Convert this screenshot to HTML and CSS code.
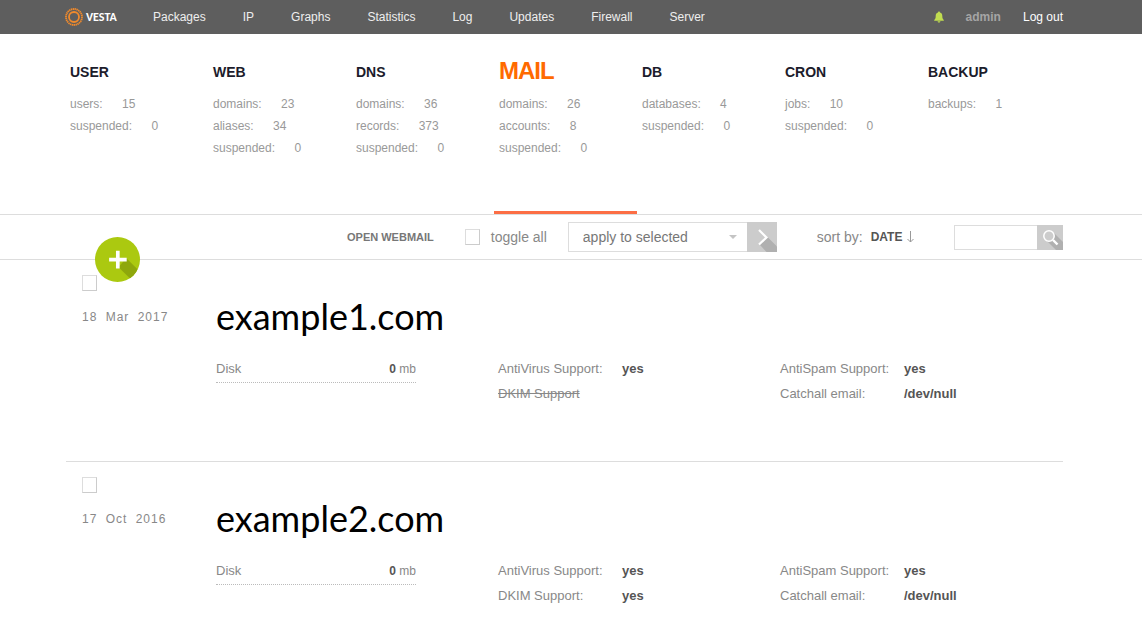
FILE: index.html
```html
<!DOCTYPE html>
<html lang="en">
<head>
<meta charset="utf-8">
<title>Vesta - MAIL</title>
<link rel="stylesheet" href="styles.css">
</head>
<body>
<header class="topbar">
  <a class="logo" href="#">
    <svg class="logo-mark" viewBox="0 0 18 18" aria-hidden="true"><circle cx="9" cy="9" r="8" fill="none" stroke="#f08a2c" stroke-width="1.8" stroke-dasharray="1.4 .5"/><circle cx="9" cy="9" r="5" fill="none" stroke="#f08a2c" stroke-width="1.8"/></svg>
    <span class="logo-text">VESTA</span>
  </a>
  <nav class="menu">
    <a href="#">Packages</a><a href="#">IP</a><a href="#">Graphs</a><a href="#">Statistics</a><a href="#">Log</a><a href="#">Updates</a><a href="#">Firewall</a><a href="#">Server</a>
  </nav>
  <div class="account">
    <button class="bell" aria-label="Notifications"><svg viewBox="0 0 10 12"><path d="M5 0.4c.7 0 1 .5 1 1C7.700 1.900 8.300 3.200 8.300 5c0 2.200.5 3 1.500 4v.8H.2V9c1-1 1.500-1.800 1.500-4C1.700 3.200 2.300 1.900 4 1.400c0-.5.3-1 1-1zM3.600 10.200h2.800c0 .8-.6 1.400-1.400 1.400s-1.400-.6-1.400-1.400z" fill="#c0dc50"/></svg></button>
    <a class="user" href="#">admin</a>
    <a class="logout" href="#">Log out</a>
  </div>
</header>

<section class="stats">
  <a class="stat" href="#"><h2>USER</h2><p>users: <span>15</span></p><p>suspended: <span>0</span></p></a>
  <a class="stat" href="#"><h2>WEB</h2><p>domains: <span>23</span></p><p>aliases: <span>34</span></p><p>suspended: <span>0</span></p></a>
  <a class="stat" href="#"><h2>DNS</h2><p>domains: <span>36</span></p><p>records: <span>373</span></p><p>suspended: <span>0</span></p></a>
  <a class="stat active" href="#"><h2>MAIL</h2><p>domains: <span>26</span></p><p>accounts: <span>8</span></p><p>suspended: <span>0</span></p></a>
  <a class="stat" href="#"><h2>DB</h2><p>databases: <span>4</span></p><p>suspended: <span>0</span></p></a>
  <a class="stat" href="#"><h2>CRON</h2><p>jobs: <span>10</span></p><p>suspended: <span>0</span></p></a>
  <a class="stat" href="#"><h2>BACKUP</h2><p>backups: <span>1</span></p></a>
</section>

<section class="toolbar">
  <button class="add" aria-label="Add mail domain"><svg viewBox="0 0 44 44"><defs><clipPath id="disc"><circle cx="22" cy="22" r="22"/></clipPath></defs><circle cx="22" cy="22" r="22" fill="#abc910"/><path clip-path="url(#disc)" d="M23 29.500 30.500 20.500 50 40 42 48z" fill="#8ea70c"/><path d="M20.500 13.500h3.600v6.700h6.900v3.800h-6.900v6.700h-3.600V24h-6.700v-3.800h6.700z" fill="#fff"/></svg></button>
  <a class="webmail" href="#">OPEN WEBMAIL</a>
  <label class="toggle"><input class="check" type="checkbox">toggle all</label>
  <form class="bulk">
    <div class="pick">
      <select aria-label="Bulk action"><option>apply to selected</option></select>
      <svg class="caret" viewBox="0 0 8 4"><path d="M0 0h8L4 4z" fill="#c4c4c4"/></svg>
    </div>
    <button class="go" type="button" aria-label="Apply"><svg viewBox="0 0 30 30"><path d="M20.500 15 30 24.500V30H19.500L13 23z" fill="#b0b0b0"/><path d="m12 8 7.500 7.500-7.500 7" fill="none" stroke="#fff" stroke-width="2.200"/></svg></button>
  </form>
  <div class="sort">sort by: <a href="#">DATE</a><svg viewBox="0 0 7 12"><path d="M3.500 0v11M.5 8l3 3 3-3" fill="none" stroke="#999"/></svg></div>
  <form class="search">
    <input type="text" aria-label="Search">
    <button type="button" aria-label="Search"><svg viewBox="0 0 26 25"><path d="M17 8 26 17v8h-7l-9-9z" fill="#b0b0b0"/><circle cx="12" cy="11" r="5.200" fill="#ccc" stroke="#fff" stroke-width="1.500"/><path d="m16 15 4.500 4.500" stroke="#fff" stroke-width="2.400"/></svg></button>
  </form>
</section>

<main class="list">
  <article class="unit">
    <div class="side"><input class="check" type="checkbox" aria-label="Select example1.com"><time datetime="2017-03-18">18 Mar 2017</time></div>
    <div class="body">
      <h1>example1.com</h1>
      <div class="facts">
        <div class="disk"><span>Disk</span><span class="amount"><b>0</b> mb</span></div>
        <dl><dt>AntiVirus Support:</dt><dd>yes</dd><dt class="off">DKIM Support</dt><dd></dd></dl>
        <dl><dt>AntiSpam Support:</dt><dd>yes</dd><dt>Catchall email:</dt><dd>/dev/null</dd></dl>
      </div>
    </div>
  </article>
  <article class="unit">
    <div class="side"><input class="check" type="checkbox" aria-label="Select example2.com"><time datetime="2016-10-17">17 Oct 2016</time></div>
    <div class="body">
      <h1>example2.com</h1>
      <div class="facts">
        <div class="disk"><span>Disk</span><span class="amount"><b>0</b> mb</span></div>
        <dl><dt>AntiVirus Support:</dt><dd>yes</dd><dt>DKIM Support:</dt><dd>yes</dd></dl>
        <dl><dt>AntiSpam Support:</dt><dd>yes</dd><dt>Catchall email:</dt><dd>/dev/null</dd></dl>
      </div>
    </div>
  </article>
</main>
</body>
</html>
```
FILE: styles.css
```css
* { box-sizing: border-box; }
body { margin: 0; background: #fff; color: #888; font: 13px/25px "Liberation Sans", Arial, sans-serif; }
a { color: inherit; text-decoration: none; }
h1, h2, p, dl, dd { margin: 0; }
button { border: 0; padding: 0; background: none; cursor: pointer; }
svg { display: block; }
input, select { font: inherit; color: inherit; }

.topbar, .toolbar { padding: 0 79px 0 65px; }
.topbar { display: flex; align-items: center; height: 34px; background: #5e5e5e; color: #eee; font-size: 12px; }
.logo { display: flex; align-items: center; gap: 3px; width: 88px; color: #fff; }
.logo-mark { width: 18px; height: 18px; }
.logo-text { font: bold 12px/18px Carlito, Lato, sans-serif; }
.menu { display: flex; gap: 37px; }
.account { display: flex; align-items: center; margin-left: auto; }
.bell { margin-right: 22px; }
.bell svg { width: 10px; height: 12px; }
.user { margin-right: 22px; color: #a5a5a5; font-weight: bold; }
.logout { color: #fff; }

.stats { display: flex; height: 181px; padding-left: 65px; border-bottom: 1px solid #ddd; font-size: 12px; color: #999; }
.stat { flex: 0 1 143px; padding: 24px 0 0 5px; border-bottom: 3px solid transparent; line-height: 22px; }
.stat h2 { height: 28px; margin-bottom: 7px; font-size: 14px; line-height: 28px; color: #1c1c2b; }
.stat span { margin-left: 16px; }
.active { border-color: #fc6e45; }
.stat.active h2 { color: #ff6a00; font-size: 24px; line-height: 26px; letter-spacing: -1px; }

.toolbar { position: relative; display: flex; align-items: center; height: 45px; border-bottom: 1px solid #ddd; font-size: 14px; }
.add { position: absolute; left: 95px; top: 22px; width: 45px; height: 45px; }
.webmail { margin: 0 31px 0 282px; font-size: 11px; font-weight: bold; color: #777; }
.check { appearance: none; flex: none; width: 15px; height: 16px; margin: 0; border: 1px solid #ccc; border-top-color: #ddd; border-left-color: #ddd; background: #fff; }
.toggle { display: flex; align-items: center; gap: 11px; margin-right: 21px; }
.bulk { display: flex; }
.pick { position: relative; width: 179px; }
.pick select { appearance: none; display: block; width: 100%; height: 30px; padding: 0 14px; border: 1px solid #ddd; border-right: 0; border-radius: 0; background: #fff; color: #777; }
.caret { position: absolute; right: 10px; top: 13px; width: 8px; height: 4px; pointer-events: none; }
.go { width: 30px; height: 30px; background: #ccc; }
.sort { display: flex; align-items: center; margin-left: 40px; white-space: pre; }
.sort a { margin: 0 5px 0 4px; font-size: 12px; font-weight: bold; color: #555; }
.sort svg { width: 7px; height: 12px; }
.search { display: flex; margin-left: auto; }
.search input { width: 83px; height: 25px; padding: 0 8px; border: 1px solid #ddd; border-right: 0; border-radius: 0; }
.search button { width: 26px; height: 25px; background: #ccc; }

.list { padding: 0 79px 0 66px; }
.unit { display: flex; min-height: 202px; padding: 15px 0 0 16px; border-bottom: 1px solid #ddd; }
.side { width: 134px; flex: none; }
.side .check { display: block; margin-bottom: 13px; }
.side time { font-size: 12px; letter-spacing: 1px; word-spacing: 4px; }
.body { flex: 1; }
.body h1 { margin: 16px 0 15px; color: #000; font: 36px/50px Lato, Carlito, sans-serif; }
.facts { display: grid; grid-template-columns: 200px 200px 1fr; column-gap: 82px; }
.disk { display: flex; justify-content: space-between; height: 27px; border-bottom: 1px dotted #bbb; }
.disk .amount { font-size: 12px; line-height: 27px; }
.disk b { color: #555; }
.facts dl { display: grid; grid-template-columns: 124px 1fr; align-content: start; }
.facts dd { color: #555; font-weight: bold; }
.off { text-decoration: line-through; }
```
